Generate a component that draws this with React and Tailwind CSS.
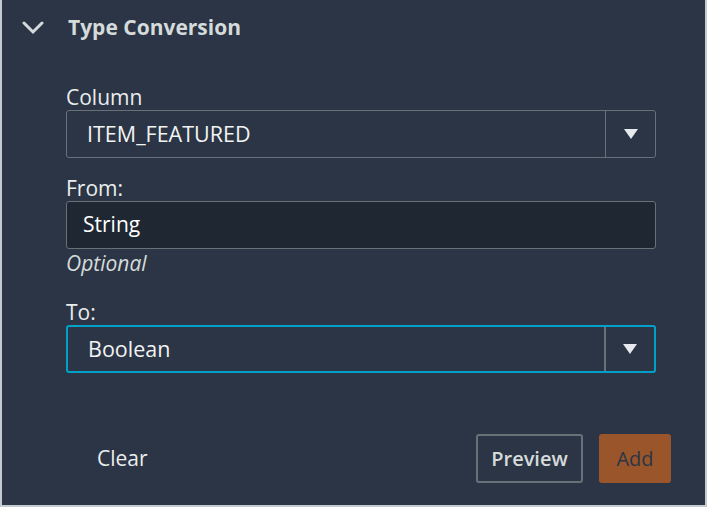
import React from "react";

function Caret() {
  return (
    <svg width="16" height="12" viewBox="0 0 16 12">
      <path d="M1 1 L15 1 L8 11 Z" fill="#e6e9ee" />
    </svg>
  );
}

function SelectBox({ value, active }) {
  return (
    <div
      className={`flex h-[48px] w-[590px] items-stretch rounded-[3px] border ${
        active ? "border-[#00a1c9] border-2" : "border-[#687078]"
      }`}
    >
      <div className="flex flex-1 items-center pl-[20px] text-[21.5px] text-[#f2f3f3]">
        {value}
      </div>
      <div
        className={`flex w-[50px] items-center justify-center border-l ${
          active ? "border-[#687078] border-l-2" : "border-[#687078]"
        }`}
      >
        <Caret />
      </div>
    </div>
  );
}

export default function App() {
  return (
    <div
      className="h-[509px] w-[710px] bg-white"
      style={{ fontFamily: '"Open Sans", "Noto Sans", sans-serif' }}
    >
      <div className="flex h-[507px] w-[707px] flex-col border-l-2 border-r-2 border-b-2 border-[#c5cad0] bg-[#2b3545]">
        <div className="flex h-[56px] items-center pl-[20px]">
          <svg width="22" height="14" viewBox="0 0 22 14">
            <path
              d="M2 2 L11 11 L20 2"
              fill="none"
              stroke="#d5dbdb"
              strokeWidth="3"
              strokeLinecap="round"
            />
          </svg>
          <span className="ml-[24px] text-[21px] font-bold text-[#d5dbdb]">
            Type Conversion
          </span>
        </div>

        <div className="ml-[64px] mt-[28px] flex flex-col">
          <div className="text-[21px] leading-[26px] text-[#eaeded]">Column</div>
          <SelectBox value="ITEM_FEATURED" />

          <div className="mt-[17px] text-[21px] leading-[26px] text-[#eaeded]">From:</div>
          <div className="flex h-[48px] w-[590px] items-center rounded-[3px] border border-[#687078] bg-[#1f2733] pl-[16px] text-[21px] text-white">
            String
          </div>
          <div className="mt-[1px] text-[21px] italic leading-[26px] text-[#d5dbdb]">
            Optional
          </div>

          <div className="mt-[23px] text-[21px] leading-[26px] text-[#eaeded]">To:</div>
          <SelectBox value="Boolean" active />
        </div>

        <div className="mt-[61px] flex items-center pl-[95px] pr-[34px]">
          <span className="text-[21px] font-medium text-[#eaeded]">Clear</span>
          <div className="flex-1" />
          <button className="flex h-[49px] w-[107px] items-center justify-center rounded-[3px] border-2 border-[#687078] text-[20px] font-semibold text-[#d5dbdb]">
            Preview
          </button>
          <button className="ml-[16px] flex h-[49px] w-[72px] items-center justify-center rounded-[3px] bg-[#9a552a] text-[20px] text-[#2b3545]">
            Add
          </button>
        </div>
      </div>
    </div>
  );
}
